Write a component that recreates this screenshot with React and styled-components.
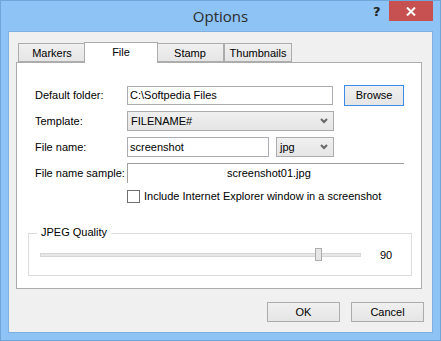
import React from 'react'
import styled, { createGlobalStyle } from 'styled-components'

const Global = createGlobalStyle`
  html, body {
    margin: 0;
    padding: 0;
    background: #8dc3f5;
  }
  body {
    font-family: "Liberation Sans", Tahoma, sans-serif;
    font-size: 11px;
    color: #000;
  }
`

const Win = styled.div`
  width: 441px;
  height: 341px;
  box-sizing: border-box;
  background: #8dc3f5;
  border: 1px solid #6fa6da;
  display: flex;
  flex-direction: column;
`

const TitleBar = styled.div`
  height: 30px;
  position: relative;
`

const Title = styled.div`
  position: absolute;
  left: 0;
  right: 0;
  top: 5px;
  text-align: center;
  font-family: "Open Sans", "DejaVu Sans", sans-serif;
  font-size: 15px;
  color: #2b2b2b;
`

const Help = styled.div`
  position: absolute;
  left: 372px;
  top: 3px;
  font-family: "DejaVu Sans", sans-serif;
  font-weight: bold;
  font-size: 13px;
  color: #222;
`

const Close = styled.div`
  position: absolute;
  left: 388px;
  top: 0;
  width: 44px;
  height: 20px;
  background: #c75050;
  display: flex;
  align-items: center;
  justify-content: center;
`

const Client = styled.div`
  flex: 1;
  margin: 0 7px 7px 7px;
  background: #f0f0f0;
  border: 1px solid #7fb0df;
  display: flex;
  flex-direction: column;
  padding: 9px 10px 0 7px;
`

const Tabs = styled.div`
  display: flex;
  align-items: flex-end;
  height: 21px;
  padding-left: 2px;
  position: relative;
  z-index: 1;
`

const Tab = styled.div`
  box-sizing: border-box;
  height: ${p => (p.$active ? '21px' : '19px')};
  width: ${p => (p.$active ? '74px' : '68px')};
  margin: ${p => (p.$active ? '0 -2px -1px' : '0')};
  border: 1px solid #acacac;
  border-bottom: ${p => (p.$active ? 'none' : '1px solid #acacac')};
  background: ${p => (p.$active ? '#fff' : 'linear-gradient(#f0f0f0, #e5e5e5)')};
  display: flex;
  justify-content: center;
  padding-top: 3px;
  z-index: ${p => (p.$active ? 2 : 1)};
`

const Panel = styled.div`
  height: 227px;
  box-sizing: border-box;
  background: #fff;
  border: 1px solid #acacac;
  padding: 22px 17px 0 18px;
  display: flex;
  flex-direction: column;
`

const Row = styled.div`
  display: flex;
  align-items: center;
  height: 20px;
  margin-bottom: ${p => p.$gap ?? 6}px;
`

const Label = styled.div`
  width: 92px;
  flex: none;
`

const Input = styled.div`
  box-sizing: border-box;
  width: ${p => p.$w}px;
  height: ${p => p.$h || 19}px;
  border: 1px solid #abadb3;
  padding: 0 2px;
  display: flex;
  align-items: center;
  background: #fff;
`

const Select = styled.div`
  box-sizing: border-box;
  width: ${p => p.$w}px;
  height: 20px;
  margin-left: ${p => p.$ml || 0}px;
  border: 1px solid #acacac;
  background: linear-gradient(#f0f0f0, #e5e5e5);
  padding: 0 5px 0 3px;
  display: flex;
  align-items: center;
  justify-content: space-between;
`

const Button = styled.div`
  box-sizing: border-box;
  width: ${p => p.$w}px;
  height: ${p => p.$h || 21}px;
  margin-left: ${p => p.$ml || 0}px;
  border: 1px solid ${p => (p.$default ? '#3c8ce7' : '#acacac')};
  background: linear-gradient(#f0f0f0, #e5e5e5);
  display: flex;
  align-items: center;
  justify-content: center;
`

const Sample = styled.div`
  box-sizing: border-box;
  width: 277px;
  height: 20px;
  align-self: flex-start;
  border-top: 1px solid #a0a0a0;
  border-left: 1px solid #a0a0a0;
  padding: 3px 0 0 99px;
`

const CheckRow = styled.div`
  display: flex;
  align-items: center;
  margin: 6px 0 0 92px;
  height: 14px;
`

const Box = styled.div`
  box-sizing: border-box;
  width: 13px;
  height: 13px;
  border: 1px solid #707070;
  background: #fff;
  margin-right: 4px;
`

const Group = styled.div`
  position: relative;
  margin: 30px 0 0 -7px;
  width: 384px;
  height: 43px;
  box-sizing: border-box;
  border: 1px solid #dcdcdc;
  padding: 15px 0 0 11px;
`

const Legend = styled.div`
  position: absolute;
  top: -8px;
  left: 8px;
  padding: 0 4px;
  background: #fff;
`

const SliderRow = styled.div`
  display: flex;
  align-items: center;
`

const Track = styled.div`
  position: relative;
  width: 321px;
  height: 4px;
  box-sizing: border-box;
  border: 1px solid #d6d6d6;
  background: #e7e7e7;
`

const Thumb = styled.div`
  position: absolute;
  top: -6px;
  width: 7px;
  height: 13px;
  box-sizing: border-box;
  border: 1px solid #acacac;
  background: #e6e6e6;
`

const Value = styled.div`
  margin-left: 19px;
`

const Footer = styled.div`
  display: flex;
  justify-content: flex-end;
  margin-top: 13px;
  margin-right: -2px;
`

export default function App () {
  const value = 90
  return (
    <Win>
      <Global />
      <TitleBar>
        <Title>Options</Title>
        <Help>?</Help>
        <Close>
          <svg width="10" height="9" viewBox="0 0 10 9">
            <path d="M1 0.5 L9 8.5 M9 0.5 L1 8.5" stroke="#fff" strokeWidth="2" />
          </svg>
        </Close>
      </TitleBar>
      <Client>
        <Tabs>
          <Tab>Markers</Tab>
          <Tab $active>File</Tab>
          <Tab>Stamp</Tab>
          <Tab>Thumbnails</Tab>
        </Tabs>
        <Panel>
          <Row>
            <Label>Default folder:</Label>
            <Input $w={207}>C:\Softpedia Files</Input>
            <Button $w={60} $ml={11} $default>Browse</Button>
          </Row>
          <Row>
            <Label>Template:</Label>
            <Select $w={207}>
              FILENAME#
              <Chevron />
            </Select>
          </Row>
          <Row>
            <Label>File name:</Label>
            <Input $w={142} $h={20}>screenshot</Input>
            <Select $w={58} $ml={7}>
              jpg
              <Chevron />
            </Select>
          </Row>
          <Row $gap={0}>
            <Label>File name sample:</Label>
            <Sample>screenshot01.jpg</Sample>
          </Row>
          <CheckRow>
            <Box />
            Include Internet Explorer window in a screenshot
          </CheckRow>
          <Group>
            <Legend>JPEG Quality</Legend>
            <SliderRow>
              <Track>
                <Thumb style={{ left: `${Math.round((value / 100) * 306) - 1}px` }} />
              </Track>
              <Value>{value}</Value>
            </SliderRow>
          </Group>
        </Panel>
        <Footer>
          <Button $w={73} $h={20}>OK</Button>
          <Button $w={73} $h={20} $ml={11}>Cancel</Button>
        </Footer>
      </Client>
    </Win>
  )
}

function Chevron () {
  return (
    <svg width="8" height="6" viewBox="0 0 8 6">
      <path d="M1 1 L4 4 L7 1" stroke="#666" strokeWidth="2" fill="none" />
    </svg>
  )
}
